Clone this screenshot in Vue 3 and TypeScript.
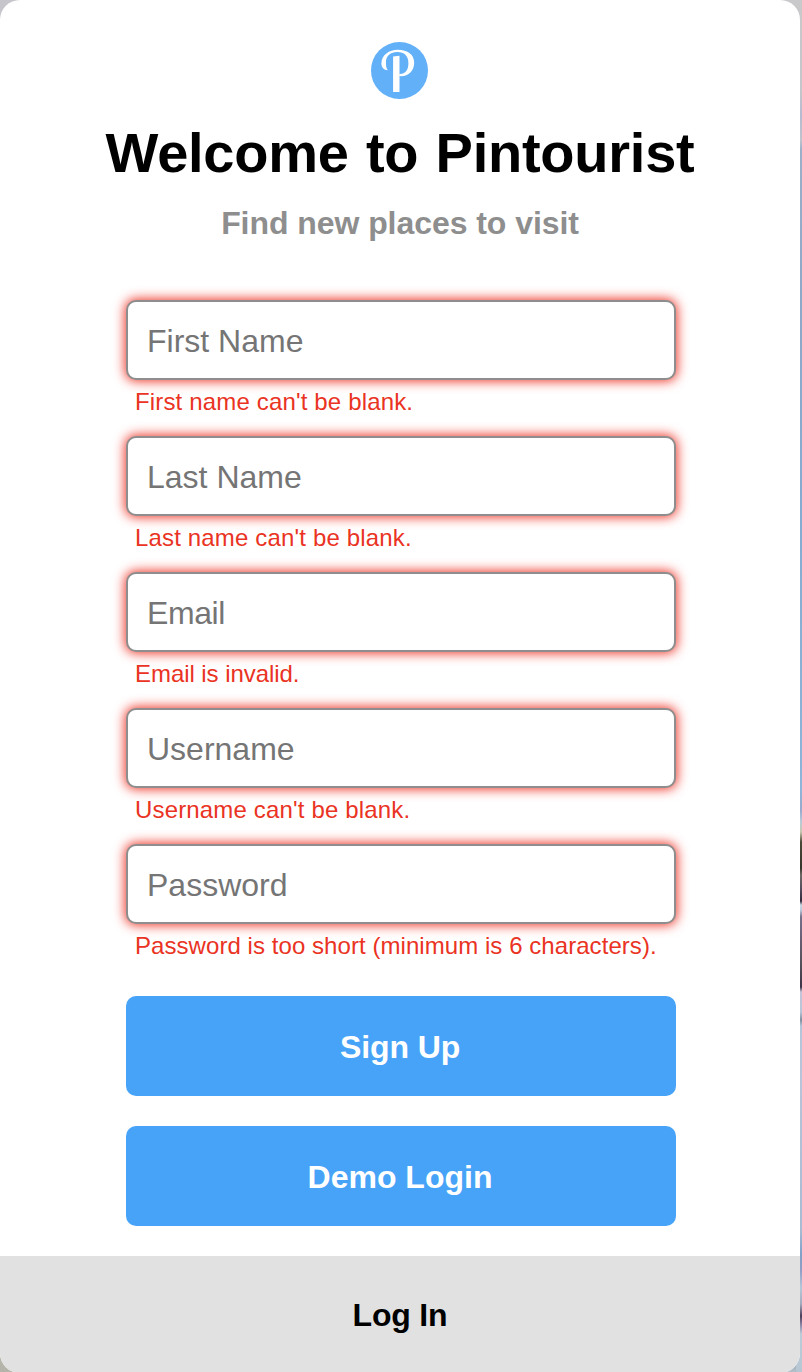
<script setup lang="ts">
import { reactive } from 'vue'

interface Field {
  key: string
  label: string
  type: string
  error: string
}

const fields: Field[] = [
  { key: 'first', label: 'First Name', type: 'text', error: "First name can't be blank." },
  { key: 'last', label: 'Last Name', type: 'text', error: "Last name can't be blank." },
  { key: 'email', label: 'Email', type: 'text', error: 'Email is invalid.' },
  { key: 'username', label: 'Username', type: 'text', error: "Username can't be blank." },
  { key: 'password', label: 'Password', type: 'password', error: 'Password is too short (minimum is 6 characters).' },
]

const values = reactive<Record<string, string>>({ first: '', last: '', email: '', username: '', password: '' })
</script>

<template>
  <div class="backdrop">
    <main class="card">
      <svg class="logo" viewBox="0 0 57 57" aria-hidden="true">
        <circle cx="28.5" cy="28.5" r="28.5" fill="#62b0f8" />
        <path d="M22.1 14.6 L28.5 13.7 V50 H22.1 Z" fill="#fff" />
        <path
          d="M16.8 28.2 C12.8 28 10.3 25.2 10.4 21.2 C10.7 13 18 7.8 26.8 7.8 C36.8 7.8 43.2 12.8 43.2 20.8 C43.2 28.6 37.6 34.3 30.2 34.3 L28.2 34.1 V32 C34.4 32.3 37.4 28 37.4 21.2 C37.4 13.9 33.2 10.1 26.4 10.1 C19.5 10.1 14.9 14.2 14.9 20.4 C14.9 23.9 15.4 26.2 16.8 28.2 Z"
          fill="#fff"
        />
      </svg>
      <h1>Welcome to Pintourist</h1>
      <h2>Find new places to visit</h2>
      <form @submit.prevent>
        <div v-for="field in fields" :key="field.key" class="field">
          <input v-model="values[field.key]" :class="field.key" :type="field.type" :placeholder="field.label" />
          <p :class="field.key">{{ field.error }}</p>
        </div>
        <button type="submit" class="signup">Sign Up</button>
        <button type="button" class="demo">Demo Login</button>
      </form>
      <footer><span>Log In</span></footer>
    </main>
  </div>
</template>

<style>
body {
  margin: 0;
}
</style>

<style scoped>
* {
  box-sizing: border-box;
}
.backdrop {
  width: 802px;
  height: 1372px;
  overflow: hidden;
  font-family: "Liberation Sans", Arial, sans-serif;
  background:
    linear-gradient(#c5c5cb, #c5c5cb) 0 0 / 40px 40px no-repeat,
    linear-gradient(#b4b4aa, #b4b4aa) 0 1332px / 40px 40px no-repeat,
    linear-gradient(#8d9699, #b3c0ca) 762px 1352px / 34px 20px no-repeat,
    linear-gradient(
      #c9c9cb 0, #c5c6cb 90px, #b5bad0 115px, #c0c4cd 140px, #9bafc7 150px,
      #8ea8c8 300px, #86abd0 500px, #8eb4d8 790px, #99a9cb 810px, #b9cbd8 822px,
      #c5c7ad 832px, #4b4937 842px, #35352b 868px, #6c6a65 875px, #51495c 890px,
      #302b3d 901px, #c7d9e3 905px, #bccbdc 910px, #74718b 917px, #675e74 940px,
      #53505a 965px, #3d3448 987px, #c5c3d7 992px, #b6c6d8 1012px, #80909e 1020px,
      #b5c5d8 1026px, #b8c4d7 1080px, #a8bbd3 1230px, #81a1c8 1254px, #919dc4 1270px,
      #b5c8d8 1288px, #a2aabd 1304px, #4d3f5b 1316px, #9390ae 1326px, #bbcbd8 1334px, #b6c7d3 1372px
    );
}
.card {
  display: flex;
  flex-direction: column;
  align-items: center;
  width: 800px;
  height: 1373px;
  padding-top: 42px;
  border-radius: 20px;
  overflow: hidden;
  background: #fff;
}
.logo {
  display: block;
  flex: none;
  width: 57px;
  height: 57px;
  margin-right: 1px;
}
h1 {
  margin: 22px 0 0;
  height: 64px;
  font-size: 56px;
  line-height: 64px;
  font-weight: 700;
  letter-spacing: -0.25px;
  word-spacing: 2px;
  color: #000;
  white-space: nowrap;
}
h2 {
  margin: 18px 0 0;
  height: 40px;
  font-size: 32px;
  line-height: 40px;
  font-weight: 700;
  letter-spacing: -0.06px;
  color: #8e8e8e;
  white-space: nowrap;
}
form {
  display: flex;
  flex-direction: column;
  width: 550px;
  margin: 57px 0 0 2px;
}
.field {
  height: 136px;
}
input {
  display: block;
  width: 550px;
  height: 80px;
  padding: 2px 20px 0 19px;
  border: 2px solid #8e8e8e;
  border-radius: 10px;
  outline: none;
  background: #fff;
  box-shadow: 0 0 12px 1px #ee3124;
  font: 32px "Liberation Sans", Arial, sans-serif;
}
input.email {
  letter-spacing: -0.4px;
}
input::placeholder {
  color: #757575;
  opacity: 1;
}
p {
  margin: 8px 0 0 9px;
  font-size: 24px;
  line-height: 28px;
  letter-spacing: 0.16px;
  color: #ea3323;
  white-space: nowrap;
}
p.email {
  letter-spacing: -0.06px;
}
p.password {
  letter-spacing: 0.06px;
}
button {
  height: 100px;
  margin: 0;
  padding: 2px 2px 0 0;
  border: 0;
  border-radius: 10px;
  background: #47a3f7;
  color: #fff;
  font: bold 32px "Liberation Sans", Arial, sans-serif;
}
.signup {
  margin-top: 16px;
  letter-spacing: -0.1px;
}
.demo {
  margin-top: 30px;
}
footer {
  display: flex;
  justify-content: center;
  align-items: center;
  flex: none;
  width: 100%;
  height: 117px;
  margin-top: 30px;
  padding-top: 1px;
  background: #e1e1e1;
  font-size: 32px;
  font-weight: 700;
  letter-spacing: -0.2px;
  color: #000;
}
</style>
